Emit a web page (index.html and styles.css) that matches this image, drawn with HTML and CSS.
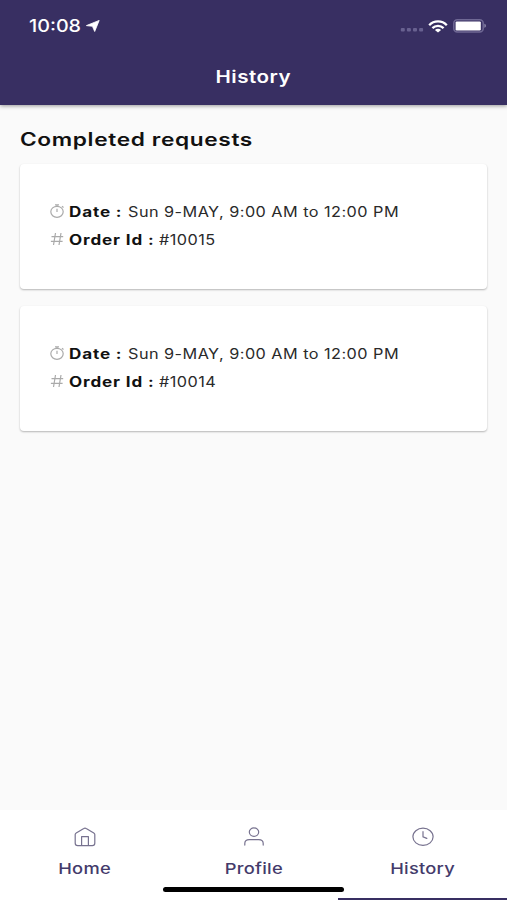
FILE: index.html
```
<!DOCTYPE html>
<html lang="en">
<head>
    <meta charset="UTF-8">
    <meta name="viewport" content="width=device-width, initial-scale=1.0">
    <title>History</title>
    <link rel="stylesheet" href="styles.css">
</head>
<body>
    <div class="header">
        <div class="status-bar">
            <div class="clock">
                <span class="time">10:08</span>
                <svg width="14" height="12" viewBox="0 0 14 12"><path d="M13.2 0.4L0.4 5.6L6.4 6.3L8.7 11.5Z" fill="#fff" stroke="#fff" stroke-width="0.8" stroke-linejoin="round"/></svg>
            </div>
            <div class="status-icons">
                <svg class="signal" width="24" height="4" viewBox="0 0 24 4" fill="#686190">
                    <rect x="0.8" y="0" width="4" height="3.6" rx="1"/>
                    <rect x="6.9" y="0" width="4" height="3.6" rx="1"/>
                    <rect x="13" y="0" width="4" height="3.6" rx="1"/>
                    <rect x="19.1" y="0" width="4" height="3.6" rx="1"/>
                </svg>
                <svg class="wifi" width="20" height="13" viewBox="0 0 20 13" fill="none" stroke="#fff" stroke-width="2.3">
                    <path d="M1.2 5.2C6 0.2 14 0.2 18.8 5.2"/>
                    <path d="M4.4 8.1C7.5 5 12.5 5 15.6 8.1"/>
                    <path d="M10 12.4L6.9 9.9C8.6 8.4 11.4 8.4 13.1 9.9Z" fill="#fff" stroke="none"/>
                </svg>
                <svg class="battery" width="34" height="14" viewBox="0 0 34 14">
                    <rect x="0.8" y="0.8" width="29.4" height="12.2" rx="3.5" fill="none" stroke="#6f6894" stroke-width="1.5"/>
                    <rect x="2.6" y="2.4" width="25.2" height="9" rx="1.2" fill="#fff"/>
                    <path d="M31.4 4.8C33.4 5.4 33.4 8.2 31.4 8.8Z" fill="#8f8aac"/>
                </svg>
            </div>
        </div>
        <div class="title"><span>History</span></div>
    </div>

    <div class="content">
        <h1 class="section-title"><span>Completed requests</span></h1>
        <div class="card">
            <div class="row">
                <svg class="icon" width="16" height="14" viewBox="0 0 16 14" fill="none" stroke="#aaa" stroke-width="1.2">
                    <ellipse cx="8" cy="7.8" rx="6.2" ry="5.5"/>
                    <path d="M6 0.8H10M8 0.8V2.3M8 4.8V8M13 2.2L14.5 3.5"/>
                </svg>
                <b class="label date-label">Date :</b>
                <span class="value">Sun 9-MAY, 9:00 AM to 12:00 PM</span>
            </div>
            <div class="row">
                <svg class="icon" width="16" height="14" viewBox="0 0 16 14" fill="none" stroke="#aaa" stroke-width="1.2">
                    <path d="M6.5 1L4.5 13M12 1L10 13M2.5 4.6H14.2M1.9 9.3H13.6"/>
                </svg>
                <b class="label order-label">Order Id :</b>
                <span class="value">#10015</span>
            </div>
        </div>
        <div class="card">
            <div class="row">
                <svg class="icon" width="16" height="14" viewBox="0 0 16 14" fill="none" stroke="#aaa" stroke-width="1.2">
                    <ellipse cx="8" cy="7.8" rx="6.2" ry="5.5"/>
                    <path d="M6 0.8H10M8 0.8V2.3M8 4.8V8M13 2.2L14.5 3.5"/>
                </svg>
                <b class="label date-label">Date :</b>
                <span class="value">Sun 9-MAY, 9:00 AM to 12:00 PM</span>
            </div>
            <div class="row">
                <svg class="icon" width="16" height="14" viewBox="0 0 16 14" fill="none" stroke="#aaa" stroke-width="1.2">
                    <path d="M6.5 1L4.5 13M12 1L10 13M2.5 4.6H14.2M1.9 9.3H13.6"/>
                </svg>
                <b class="label order-label">Order Id :</b>
                <span class="value">#10014</span>
            </div>
        </div>
    </div>

    <div class="tab-bar">
        <a class="tab">
            <svg width="22" height="20" viewBox="0 0 22 20" fill="none" stroke="#77728f" stroke-width="1.2" stroke-linejoin="round">
                <path d="M2.2 5.9L9.8 1.4C10.6 0.9 11.4 0.9 12.2 1.4L19.8 5.9C20.5 6.3 20.8 6.8 20.8 7.5V16.3C20.8 17.8 19.8 18.6 18.3 18.6H3.7C2.2 18.6 1.2 17.8 1.2 16.3V7.5C1.2 6.8 1.5 6.3 2.2 5.9Z"/>
                <path d="M7.6 18.6V9.6H14.4V18.6"/>
            </svg>
            <span>Home</span>
        </a>
        <a class="tab">
            <svg width="22" height="20" viewBox="0 0 22 20" fill="none" stroke="#77728f" stroke-width="1.2" stroke-linecap="round">
                <ellipse cx="11" cy="5.1" rx="4.7" ry="4.2"/>
                <path d="M1.8 18.1V16.5C1.8 14.2 3.7 12.6 6.3 12.6H15.7C18.3 12.6 20.2 14.2 20.2 16.5V18.1"/>
            </svg>
            <span>Profile</span>
        </a>
        <a class="tab active">
            <svg width="22" height="20" viewBox="0 0 22 20" fill="none" stroke="#77728f" stroke-width="1.2" stroke-linecap="round">
                <ellipse cx="11" cy="9.8" rx="10.1" ry="8.6"/>
                <path d="M11 4.7V9.8L14.8 11.4"/>
            </svg>
            <span>History</span>
        </a>
        <div class="home-indicator"></div>
    </div>
</body>
</html>
```
FILE: styles.css
```
* {
    box-sizing: border-box;
}

body {
    font-family: Inter, "Open Sans", sans-serif;
    margin: 0;
    height: 900px;
    display: flex;
    flex-direction: column;
    background-color: #fafafa;
    overflow: hidden;
}

svg {
    display: block;
    flex: none;
}

.header {
    height: 105px;
    background-color: #382f62;
    color: #fff;
    box-shadow: 0 1px 4px rgba(0, 0, 0, 0.4);
}

.status-bar {
    height: 52px;
    padding: 0 20px 0 29px;
    display: flex;
    justify-content: space-between;
    align-items: center;
}

.clock {
    display: flex;
    align-items: center;
    gap: 4px;
}

.time {
    width: 53px;
    font-size: 17px;
    font-weight: 500;
    transform: scaleX(1.16);
    transform-origin: left;
}

.status-icons {
    display: flex;
    align-items: center;
}

.signal {
    margin: 8px 4px 0 0;
}

.wifi {
    margin-right: 5px;
}

.title {
    height: 49px;
    display: flex;
    justify-content: center;
    align-items: center;
    font-size: 17px;
    font-weight: 600;
    letter-spacing: 0.4px;
}

.title span {
    transform: scaleX(1.21);
}

.content {
    flex: 1;
    padding: 21px 20px 0 20px;
}

.section-title {
    margin: 0 0 10px;
    font-size: 18px;
    line-height: 28px;
    font-weight: 600;
    letter-spacing: 0.5px;
    color: #111;
}

.section-title span {
    display: inline-block;
    transform: scaleX(1.26);
    transform-origin: left;
}

.card {
    height: 125px;
    margin-bottom: 17px;
    padding: 33px 29px;
    background-color: #fff;
    border-radius: 4px;
    box-shadow: 0 1px 2px rgba(0, 0, 0, 0.28);
}

.row {
    height: 28px;
    display: flex;
    align-items: center;
    font-size: 14px;
    white-space: nowrap;
}

.icon {
    margin-right: 4px;
}

.label,
.value {
    transform-origin: left;
}

.label {
    font-weight: 700;
    letter-spacing: 0.7px;
    color: #111;
    transform: scaleX(1.22);
}

.value {
    letter-spacing: 0.4px;
    color: #2a2a2a;
    transform: scaleX(1.16);
}

.date-label {
    width: 59px;
}

.order-label {
    width: 90px;
}

.tab-bar {
    position: relative;
    height: 90px;
    display: flex;
    background-color: #fff;
}

.tab {
    flex: 1;
    padding-top: 17px;
    display: flex;
    flex-direction: column;
    align-items: center;
    color: #443b6b;
    font-size: 15px;
    line-height: 24px;
    font-weight: 500;
}

.tab span {
    margin-top: 10px;
    letter-spacing: 0.2px;
    transform: scaleX(1.22);
}

.tab.active {
    border-bottom: 2px solid #382f62;
}

.home-indicator {
    position: absolute;
    left: 163px;
    bottom: 8px;
    width: 181px;
    height: 5px;
    border-radius: 3px;
    background-color: #000;
}
```
